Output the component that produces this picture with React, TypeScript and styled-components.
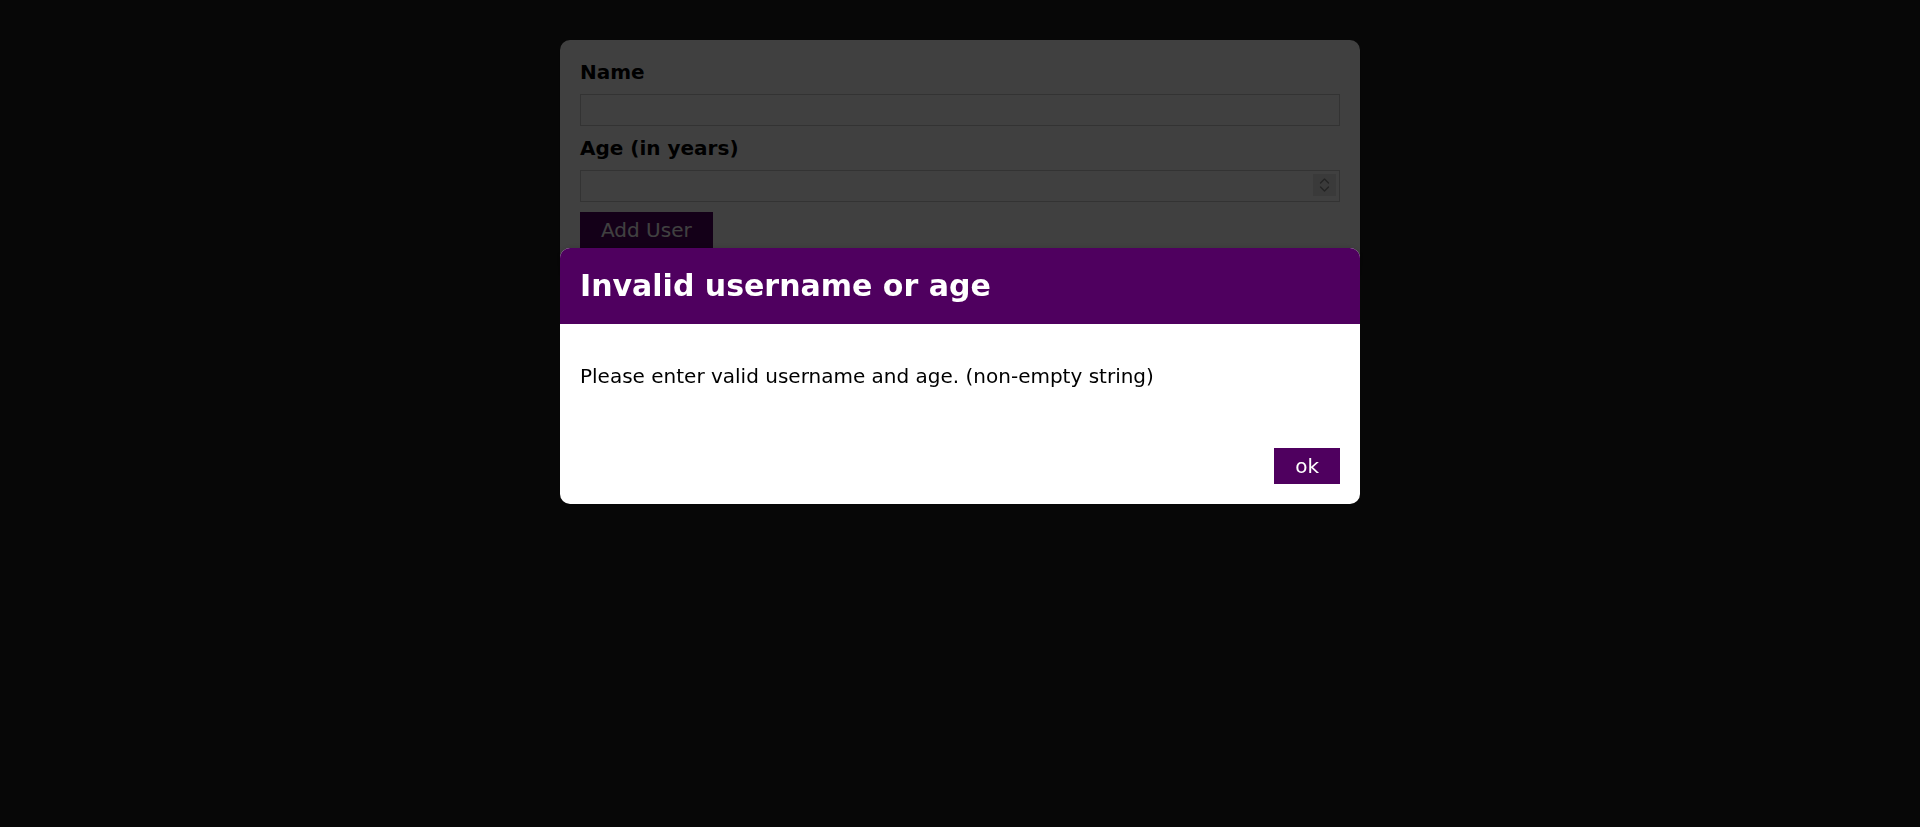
import React, { useState } from "react";
import styled, { createGlobalStyle } from "styled-components";

const GlobalStyle = createGlobalStyle`
  * {
    box-sizing: border-box;
  }
  html {
    font-family: "DejaVu Sans", sans-serif;
    font-size: 20px;
  }
  body {
    margin: 0;
    background: #1f1f1f;
  }
`;

const Card = styled.div`
  background: white;
  box-shadow: 0 2px 8px rgba(0, 0, 0, 0.26);
  border-radius: 10px;
`;

const FormCard = styled(Card)`
  margin: 40px auto;
  padding: 20px;
  width: 90%;
  max-width: 800px;
`;

const Label = styled.label`
  display: block;
  font-weight: bold;
  margin-bottom: 10px;
`;

const Field = styled.div`
  position: relative;
  margin-bottom: 10px;
`;

const Input = styled.input`
  font: inherit;
  display: block;
  width: 100%;
  border: 1px solid #ccc;
  padding: 3px;

  &::-webkit-inner-spin-button,
  &::-webkit-outer-spin-button {
    -webkit-appearance: none;
    margin: 0;
  }
`;

// stands in for the browser's stepper, drawn the way the screenshot shows it
const Stepper = styled.div`
  position: absolute;
  top: 4px;
  right: 4px;
  width: 23px;
  height: 22px;
  background: #e6e6e6;
  pointer-events: none;
  svg {
    display: block;
  }
`;

const Button = styled.button`
  font: inherit;
  border: 1px solid #4f005f;
  background: #4f005f;
  color: white;
  padding: 5px 20px;
  cursor: pointer;
`;

const Backdrop = styled.div`
  position: fixed;
  top: 0;
  left: 0;
  width: 100%;
  height: 100vh;
  z-index: 10;
  background: rgba(0, 0, 0, 0.75);
`;

const Modal = styled(Card)`
  position: fixed;
  top: 30vh;
  left: calc(50% - 400px);
  width: 800px;
  z-index: 100;
  overflow: hidden;
`;

const Header = styled.header`
  background: #4f005f;
  padding: 20px;
  h2 {
    margin: 0;
    color: white;
    font-size: 30px;
    line-height: 36px;
  }
`;

const Content = styled.div`
  padding: 20px;
  p {
    margin: 20px 0;
  }
`;

const Actions = styled.footer`
  padding: 20px;
  display: flex;
  justify-content: flex-end;
`;

export default function App() {
  const [name, setName] = useState("");
  const [age, setAge] = useState("");
  const [error, setError] = useState(true);

  return (
    <>
      <GlobalStyle />
      <FormCard>
        <form onSubmit={(e) => { e.preventDefault(); setError(true); }}>
          <Label htmlFor="username">Name</Label>
          <Field>
            <Input id="username" type="text" value={name} onChange={(e) => setName(e.target.value)} />
          </Field>
          <Label htmlFor="age">Age (in years)</Label>
          <Field>
            <Input id="age" type="number" value={age} onChange={(e) => setAge(e.target.value)} />
            <Stepper>
              <svg width="23" height="22" viewBox="0 0 23 22" fill="none" stroke="#8c8c8c" strokeWidth="1.4" strokeLinecap="round" strokeLinejoin="round">
                <polyline points="7.5,9 11.5,5 15.5,9" />
                <polyline points="7.5,13 11.5,17 15.5,13" />
              </svg>
            </Stepper>
          </Field>
          <Button type="submit">Add User</Button>
        </form>
      </FormCard>
      {error && (
        <>
          <Backdrop onClick={() => setError(false)} />
          <Modal>
            <Header>
              <h2>Invalid username or age</h2>
            </Header>
            <Content>
              <p>Please enter valid username and age. (non-empty string)</p>
            </Content>
            <Actions>
              <Button onClick={() => setError(false)}>ok</Button>
            </Actions>
          </Modal>
        </>
      )}
    </>
  );
}
